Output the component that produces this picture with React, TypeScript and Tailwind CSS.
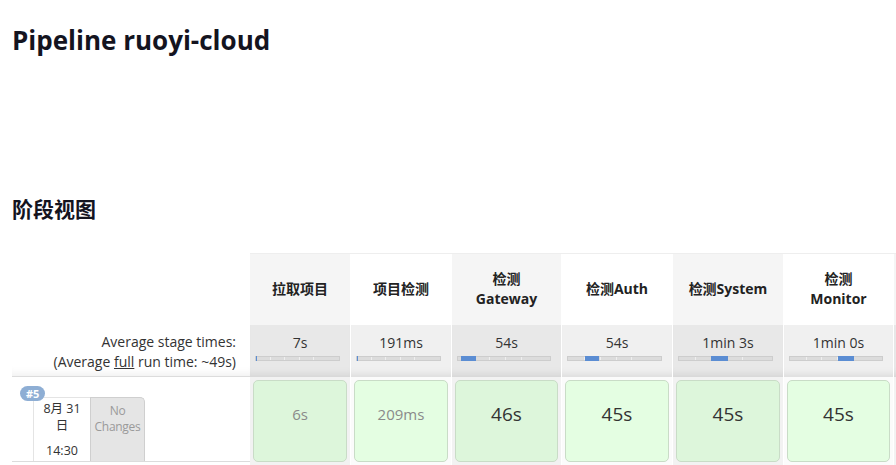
import React from "react";

type Col = {
  name: string[];
  w: number;
  odd: boolean;
  avg: string;
  fill: [number, number];
  run: string;
  big: boolean;
};

const cols: Col[] = [
  { name: ["拉取项目"], w: 100, odd: true, avg: "7s", fill: [0, 1], run: "6s", big: false },
  { name: ["项目检测"], w: 100, odd: false, avg: "191ms", fill: [0, 1], run: "209ms", big: false },
  { name: ["检测", "Gateway"], w: 109, odd: true, avg: "54s", fill: [3, 15], run: "46s", big: true },
  { name: ["检测Auth"], w: 110, odd: false, avg: "54s", fill: [17, 14], run: "45s", big: true },
  { name: ["检测System"], w: 110, odd: true, avg: "1min 3s", fill: [32, 17], run: "45s", big: true },
  { name: ["检测", "Monitor"], w: 109, odd: false, avg: "1min 0s", fill: [48, 16], run: "45s", big: true },
  { name: [""], w: 100, odd: true, avg: "", fill: [0, 0], run: "", big: true },
];

function Bar({ width, fill }: { width: number; fill: [number, number] }) {
  const ticks = [1, 2, 3, 4].map((i) => Math.round((width * i) / 6));
  return (
    <div
      className="relative h-[5px] border border-[#cdcdcd] bg-[#dcdcdc]"
      style={{ width }}
    >
      {ticks.map((t) => (
        <div key={t} className="absolute top-0 h-full w-px bg-[#efefef]" style={{ left: t }} />
      ))}
      {fill[1] > 0 && (
        <div
          className="absolute -top-px h-[5px] bg-[#5b8dd3]"
          style={{ left: fill[0], width: fill[1] }}
        />
      )}
    </div>
  );
}

function StageColumn({ c }: { c: Col }) {
  const headBg = c.odd ? "bg-[#f5f5f5]" : "bg-white";
  const avgBg = c.odd ? "bg-[#e8e8e8]" : "bg-[#f0f0f0]";
  const runBg = c.odd ? "bg-[#f2f2f2]" : "bg-[#fbfbfb]";
  const cellBg = c.odd ? "bg-[#ddf6db]" : "bg-[#e4fee2]";
  return (
    <div className="flex shrink-0 flex-col" style={{ width: c.w }}>
      <div
        className={`flex h-[71px] flex-col items-center justify-center pb-[2px] text-center text-[14px] font-bold leading-[20px] text-[#222] ${headBg}`}
      >
        {c.name.map((n, i) => (
          <div key={i}>{n}</div>
        ))}
      </div>
      <div
        className={`flex h-[52px] flex-col pt-[8px] ${avgBg} shadow-[inset_0_-9px_9px_-7px_rgba(0,0,0,0.10)]`}
      >
        <div className="h-[20px] text-center text-[14px] leading-[20px] text-[#333]">{c.avg}</div>
        <div className="mt-[3px] pl-[5px]">
          {c.avg && <Bar width={c.w - 15} fill={c.fill} />}
        </div>
      </div>
      <div className={`h-[90px] px-[3px] pb-[5px] pt-[3px] ${runBg}`}>
        <div
          className={`h-[82px] rounded-[5px] border border-[#c9dcc7] pt-[22px] text-center ${cellBg} ${
            c.big ? "text-[19px] leading-[22px] text-[#333]" : "text-[15px] leading-[22px] text-[#8a8a8a]"
          }`}
        >
          {c.run}
        </div>
      </div>
    </div>
  );
}

export default function App() {
  return (
    <div className="h-[465px] w-[896px] overflow-hidden bg-white font-['Open_Sans','Noto_Sans_CJK_SC',sans-serif] text-[#222]">
      <h1 className="ml-[12px] mt-[22px] text-[26px] font-bold leading-[36px] text-[#14141f]">
        Pipeline ruoyi-cloud
      </h1>
      <h2 className="ml-[12px] mt-[136px] text-[21px] font-bold leading-[30px] text-[#14141f]">
        阶段视图
      </h2>
      <div className="mt-[29px] flex">
        <div className="flex w-[238px] shrink-0 flex-col ml-[12px]">
          <div className="h-[71px]" />
          <div className="h-[52px] pr-[14px] pt-[8px] text-right text-[14px] leading-[20px] text-[#333] shadow-[inset_0_-9px_9px_-7px_rgba(0,0,0,0.07)]">
            <div>Average stage times:</div>
            <div>
              (Average <span className="underline">full</span> run time: ~49s)
            </div>
          </div>
          <div className="relative h-[86px] border-y border-[#dcdcdc] bg-white">
            <div className="absolute left-[8px] top-[9px] z-10 rounded-full bg-[#8eaed4] px-[6px] text-[11px] font-bold leading-[15px] text-white">
              #5
            </div>
            <div className="ml-[21px] mt-[20px] flex h-[64px]">
              <div className="w-[57px] rounded-tl-[4px] border-l border-t border-[#e4e4e4] bg-white pt-[2px] text-center text-[12.5px] leading-[17px] text-[#333]">
                <div>8月 31</div>
                <div>日</div>
                <div className="mt-[8px]">14:30</div>
              </div>
              <div className="w-[55px] rounded-tr-[5px] border border-b-0 border-[#cfcfcf] bg-[#e5e5e5] pt-[5px] text-center text-[12px] leading-[16px] tracking-[-0.3px] text-[#9a9a9a]">
                <div>No</div>
                <div>Changes</div>
              </div>
            </div>
          </div>
        </div>
        <div className="flex gap-px border-t border-[#eeeeee] bg-white">
          {cols.map((c, i) => (
            <StageColumn key={i} c={c} />
          ))}
        </div>
      </div>
    </div>
  );
}
